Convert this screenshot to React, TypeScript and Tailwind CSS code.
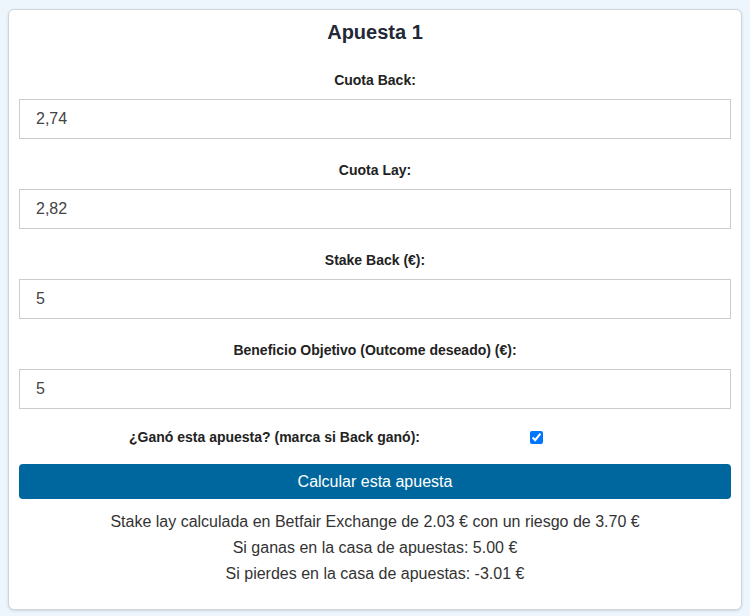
import React from "react";

const fields = [
  { label: "Cuota Back:", value: "2,74" },
  { label: "Cuota Lay:", value: "2,82" },
  { label: "Stake Back (€):", value: "5" },
  { label: "Beneficio Objetivo (Outcome deseado) (€):", value: "5" },
];

export default function App() {
  return (
    <div
      className="w-[750px] h-[616px] bg-[#edf5fd] pt-[9px] pl-[8px] overflow-hidden"
      style={{ fontFamily: '"Liberation Sans", Arial, sans-serif' }}
    >
      <div className="w-[734px] h-[601px] bg-white border border-[#cfd4d9] rounded-[6px] shadow-[0_1px_3px_rgba(0,0,0,0.12)] px-[10px] pt-[10px]">
        <h2 className="text-[20px] leading-[24px] font-bold text-center text-[#1f2937]">
          Apuesta 1
        </h2>
        <div className="mt-[28px]">
          {fields.map((f, i) => (
            <div key={i} className={i === 0 ? "" : "mt-[23px]"}>
              <label className="block text-[14px] leading-[16px] font-bold text-center text-[#222] mb-[11px]">
                {f.label}
              </label>
              <input
                readOnly
                value={f.value}
                className="block w-full h-[40px] border border-[#cccccc] px-[16px] text-[16px] text-[#444] bg-white outline-none"
                style={{ fontFamily: '"Liberation Sans", Arial, sans-serif' }}
              />
            </div>
          ))}
        </div>
        <div className="mt-[18px] h-[20px] flex items-center">
          <span className="w-[511px] text-center text-[14px] font-bold text-[#222]">
            ¿Ganó esta apuesta? (marca si Back ganó):
          </span>
          <input type="checkbox" defaultChecked className="w-[13px] h-[13px] m-0" />
        </div>
        <button className="mt-[17px] w-full h-[35px] rounded-[4px] bg-[#00679e] text-white text-[16px] leading-[35px] text-center">
          Calcular esta apuesta
        </button>
        <div className="mt-[10px] text-center text-[16px] leading-[26px] text-[#333]">
          <p>Stake lay calculada en Betfair Exchange de 2.03 € con un riesgo de 3.70 €</p>
          <p>Si ganas en la casa de apuestas: 5.00 €</p>
          <p>Si pierdes en la casa de apuestas: -3.01 €</p>
        </div>
      </div>
    </div>
  );
}
